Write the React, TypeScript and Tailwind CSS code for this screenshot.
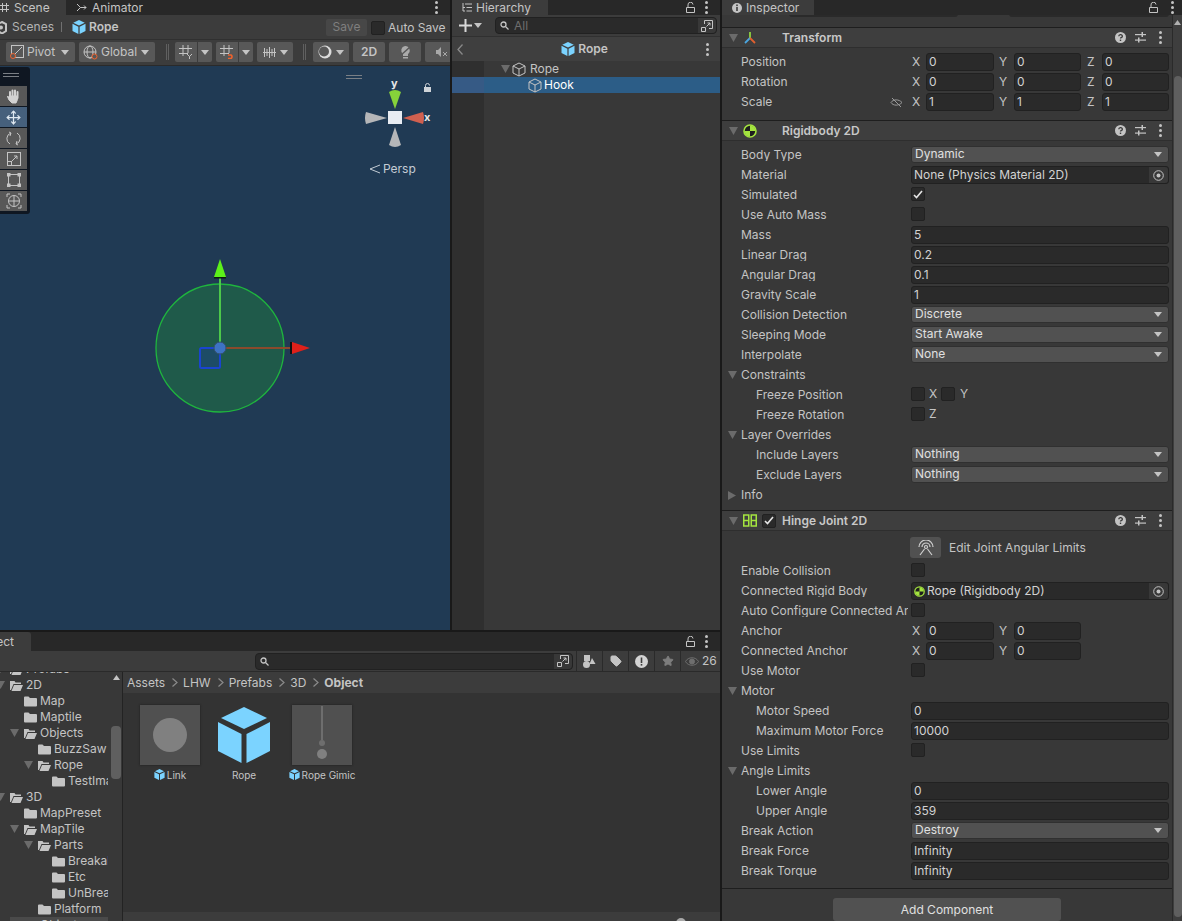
import React from 'react';
import { Move, Star, Tag } from 'lucide-react';

const Down = ({ className = '' }: { className?: string }) => (
  <svg width="9" height="8" viewBox="0 0 9 8" className={`shrink-0 ${className}`}><path d="M0 0h9L4.500 8z" fill="#6b6b6b" /></svg>
);
const Right = () => (
  <svg width="8" height="9" viewBox="0 0 8 9" className="shrink-0"><path d="M0 0v9l8-4.500z" fill="#6b6b6b" /></svg>
);
const Caret = ({ color = '#c4c4c4' }: { color?: string }) => (
  <svg width="8" height="5" viewBox="0 0 8 5" className="shrink-0"><path d="M0 0h8L4 5z" fill={color} /></svg>
);

const PrefabCube = ({ size = 14 }: { size?: number }) => (
  <svg width={size} height={size} viewBox="0 0 52 56" className="shrink-0">
    <path d="M26 0 49 11 26 22 3 11z" fill="#7bd3ff" />
    <path d="M0 15 23.500 27V56L0 44z" fill="#7bd3ff" />
    <path d="M52 15 28.500 27V56L52 44z" fill="#7bd3ff" />
  </svg>
);
const HollowCube = () => (
  <svg width="14" height="15" viewBox="0 0 14 15" fill="none" stroke="#c4c4c4" strokeWidth="1" className="shrink-0">
    <path d="M7 1 13 4v7l-6 3-6-3V4zM1 4l6 3 6-3M7 7v7" />
  </svg>
);
const Dots = () => (
  <svg width="3" height="13" viewBox="0 0 3 13" className="shrink-0" fill="#c4c4c4">
    <rect y="0" width="3" height="3" rx="1.500" /><rect y="5" width="3" height="3" rx="1.500" /><rect y="10" width="3" height="3" rx="1.500" />
  </svg>
);
const Lock = () => (
  <svg width="9" height="11" viewBox="0 0 9 11" fill="none" stroke="#c4c4c4" className="shrink-0">
    <path d="M.5 5.500h8v5h-8zM2 5.500V3a2.500 2.500 0 0 1 5-.5" />
  </svg>
);
const RbIcon = ({ size = 14 }: { size?: number }) => (
  <svg width={size} height={size} viewBox="0 0 14 14" className="shrink-0">
    <circle cx="7" cy="7" r="6" fill="#1e1e1e" stroke="#a4e43f" strokeWidth="1.600" />
    <path d="M7 7V1.500A5.500 5.500 0 0 1 12.500 7zM7 7v5.500A5.500 5.500 0 0 1 1.500 7z" fill="#a4e43f" />
  </svg>
);
const Help = () => (
  <svg width="11" height="11" viewBox="0 0 11 11" className="shrink-0">
    <circle cx="5.500" cy="5.500" r="5.500" fill="#c4c4c4" />
    <path d="M3.800 4.200a1.800 1.500 0 1 1 2.400 1.400c-.5.200-.7.500-.7 1" fill="none" stroke="#383838" strokeWidth="1.300" />
    <rect x="4.800" y="7.600" width="1.400" height="1.400" fill="#383838" />
  </svg>
);
const Sliders = () => (
  <svg width="11" height="11" viewBox="0 0 11 11" fill="#c4c4c4" className="shrink-0">
    <rect y="2" width="11" height="1.200" /><rect y="7.500" width="11" height="1.200" />
    <rect x="6.500" y="0" width="1.500" height="5" /><rect x="3" y="5.500" width="1.500" height="5" />
  </svg>
);
const Folder = ({ open }: { open?: boolean }) => (
  <svg width="13" height="11" viewBox="0 0 13 11" className="shrink-0">
    {open ? (
      <path d="M0 1h4.500l1 1.500H11v1.500H3.500L1 10H0zM4 5h9l-2.500 6H1.500z" fill="#c4c4c4" />
    ) : (
      <path d="M0 1.500A1 1 0 0 1 1 .5h3.500l1.500 1.500h6a1 1 0 0 1 1 1v6.500a1 1 0 0 1-1 1H1a1 1 0 0 1-1-1z" fill="#c4c4c4" />
    )}
  </svg>
);
const Search = () => (
  <svg width="9" height="9" viewBox="0 0 9 9" fill="none" stroke="#c4c4c4" strokeWidth="1.300" className="shrink-0">
    <circle cx="3.500" cy="3.500" r="2.500" /><path d="M5.500 5.500 8.500 8.500" />
  </svg>
);
const SearchWin = () => (
  <svg width="12" height="12" viewBox="0 0 12 12" fill="none" stroke="#c4c4c4" className="shrink-0">
    <path d="M3.500 4V.5h8v8H8M.500 7.500h4v4h-4zM5.500 6.500 9 3M6.500 3H9v2.500" />
  </svg>
);
const Target = () => (
  <svg width="11" height="11" viewBox="0 0 11 11" fill="none" className="shrink-0">
    <circle cx="5.500" cy="5.500" r="4.800" stroke="#c4c4c4" /><circle cx="5.500" cy="5.500" r="2" fill="#c4c4c4" />
  </svg>
);
const Check = () => (
  <svg width="10" height="9" viewBox="0 0 10 9" fill="none" stroke="#e6e6e6" strokeWidth="1.600"><path d="M1 5l2.500 2.500L9 1" /></svg>
);
const CheckBox = ({ on }: { on?: boolean }) => (
  <div className="w-[14px] h-[14px] rounded-[2px] bg-[#2a2a2a] border border-[#212121] flex items-center justify-center shrink-0">
    {on && <Check />}
  </div>
);
const Field = ({ v, w }: { v: string; w: string }) => (
  <div className={`h-[18px] ${w} rounded-[3px] bg-[#2a2a2a] border border-[#212121] pl-[2px] flex items-center text-[#d2d2d2]`}>{v}</div>
);

type Row =
  | { k: 'text' | 'select' | 'object'; label: string; v: string; sub?: boolean }
  | { k: 'check'; label: string; on?: boolean; sub?: boolean }
  | { k: 'fold'; label: string; closed?: boolean }
  | { k: 'vec'; label: string; v: string[]; link?: boolean }
  | { k: 'custom'; label: string; sub?: boolean; node: React.ReactNode };

const Label = ({ text, sub }: { text: string; sub?: boolean }) => (
  <div className={`w-[186px] mr-[3px] overflow-hidden whitespace-nowrap shrink-0 ${sub ? 'pl-[34px]' : 'pl-[19px]'}`}>{text}</div>
);

const InspectorRow = ({ r }: { r: Row }) => {
  if (r.k === 'fold') {
    return (
      <div className="h-5 flex items-center pl-[6px] gap-[4px]">
        <div className="w-[9px] flex">{r.closed ? <Right /> : <Down />}</div>
        <span>{r.label}</span>
      </div>
    );
  }
  return (
    <div className="h-5 flex items-center relative">
      <Label text={r.label} sub={'sub' in r ? r.sub : false} />
      {r.k === 'text' && <Field v={r.v} w="w-[258px]" />}
      {r.k === 'select' && (
        <div className="h-[17px] relative -top-[1px] w-[258px] rounded-[3px] bg-[#515151] border border-[#303030] pl-[3px] pr-[6px] flex items-center justify-between text-[#e0e0e0]">
          {r.v}<Caret />
        </div>
      )}
      {r.k === 'object' && (
        <div className="h-[18px] w-[258px] rounded-[3px] bg-[#2a2a2a] border border-[#212121] pl-[2px] flex items-center justify-between text-[#d2d2d2]">
          <span className="flex items-center gap-[2px]">{r.v.startsWith('Rope') && <RbIcon size={11} />}{r.v}</span>
          <span className="w-[19px] h-full bg-[#383838] rounded-r-[3px] flex items-center justify-center"><Target /></span>
        </div>
      )}
      {r.k === 'check' && <div className="relative -top-[1px]"><CheckBox on={r.on} /></div>}
      {r.k === 'custom' && r.node}
      {r.k === 'vec' && (
        <>
          {r.link && (
            <svg width="13" height="11" viewBox="0 0 13 11" fill="none" stroke="#9a9a9a" className="absolute left-[168px]">
              <path d="M1 5.500C3 2 9 2 12 5.500 9 9 3 9 1 5.500zM2 1l9 9" />
            </svg>
          )}
          <div className="w-[15px] pl-[1px]">X</div><Field v={r.v[0]} w="w-[68px]" />
          {r.v[1] !== undefined && <div className="w-5 pl-[5px]">Y</div>}
          {r.v[1] !== undefined && <Field v={r.v[1]} w="w-[67px]" />}
          {r.v[2] !== undefined && <div className="w-[21px] pl-[6px]">Z</div>}
          {r.v[2] !== undefined && <Field v={r.v[2]} w="w-[67px]" />}
        </>
      )}
    </div>
  );
};

const ComponentHeader = ({ icon, title, toggle }: { icon: React.ReactNode; title: string; toggle?: boolean }) => (
  <div className="h-[21px] flex items-center bg-[#3e3e3e] border-t border-[#1e1e1e] border-b-[#2e2e2e] border-b shrink-0">
    <div className="pl-[7px] w-[21px]"><Down /></div>
    <div className="w-[18px] flex justify-start">{icon}</div>
    {toggle ? (
      <><div className="ml-[1px] mr-[6px]"><CheckBox on /></div><span className="font-semibold text-[#c8c8c8]">{title}</span></>
    ) : (
      <span className="ml-[21px] font-semibold text-[#c8c8c8]">{title}</span>
    )}
    <div className="ml-auto flex items-center pr-[10px]"><Help /><div className="ml-[9px] mr-[13px]"><Sliders /></div><Dots /></div>
  </div>
);

const transformRows: Row[] = [
  { k: 'vec', label: 'Position', v: ['0', '0', '0'] },
  { k: 'vec', label: 'Rotation', v: ['0', '0', '0'] },
  { k: 'vec', label: 'Scale', v: ['1', '1', '1'], link: true },
];

const rigidRows: Row[] = [
  { k: 'select', label: 'Body Type', v: 'Dynamic' },
  { k: 'object', label: 'Material', v: 'None (Physics Material 2D)' },
  { k: 'check', label: 'Simulated', on: true },
  { k: 'check', label: 'Use Auto Mass' },
  { k: 'text', label: 'Mass', v: '5' },
  { k: 'text', label: 'Linear Drag', v: '0.2' },
  { k: 'text', label: 'Angular Drag', v: '0.1' },
  { k: 'text', label: 'Gravity Scale', v: '1' },
  { k: 'select', label: 'Collision Detection', v: 'Discrete' },
  { k: 'select', label: 'Sleeping Mode', v: 'Start Awake' },
  { k: 'select', label: 'Interpolate', v: 'None' },
  { k: 'fold', label: 'Constraints' },
  {
    k: 'custom', label: 'Freeze Position', sub: true,
    node: <div className="flex items-center relative -top-[1px]"><CheckBox /><span className="ml-[4px] w-[12px]">X</span><CheckBox /><span className="ml-[5px]">Y</span></div>,
  },
  { k: 'custom', label: 'Freeze Rotation', sub: true, node: <div className="flex items-center relative -top-[1px]"><CheckBox /><span className="ml-[4px]">Z</span></div> },
  { k: 'fold', label: 'Layer Overrides' },
  { k: 'select', label: 'Include Layers', v: 'Nothing', sub: true },
  { k: 'select', label: 'Exclude Layers', v: 'Nothing', sub: true },
  { k: 'fold', label: 'Info', closed: true },
];

const hingeRows: Row[] = [
  { k: 'check', label: 'Enable Collision' },
  { k: 'object', label: 'Connected Rigid Body', v: 'Rope (Rigidbody 2D)' },
  { k: 'check', label: 'Auto Configure Connected Anchor' },
  { k: 'vec', label: 'Anchor', v: ['0', '0'] },
  { k: 'vec', label: 'Connected Anchor', v: ['0', '0'] },
  { k: 'check', label: 'Use Motor' },
  { k: 'fold', label: 'Motor' },
  { k: 'text', label: 'Motor Speed', v: '0', sub: true },
  { k: 'text', label: 'Maximum Motor Force', v: '10000', sub: true },
  { k: 'check', label: 'Use Limits' },
  { k: 'fold', label: 'Angle Limits' },
  { k: 'text', label: 'Lower Angle', v: '0', sub: true },
  { k: 'text', label: 'Upper Angle', v: '359', sub: true },
  { k: 'select', label: 'Break Action', v: 'Destroy' },
  { k: 'text', label: 'Break Force', v: 'Infinity' },
  { k: 'text', label: 'Break Torque', v: 'Infinity' },
];

const Inspector = () => (
  <div className="w-[460px] h-full flex flex-col bg-[#383838] shrink-0 overflow-hidden">
    <div className="h-[15px] bg-[#282828] flex items-center shrink-0">
      <div className="w-[92px] h-full bg-[#3c3c3c] flex items-center pl-[10px] gap-[4px]">
        <svg width="10" height="10" viewBox="0 0 10 10"><circle cx="5" cy="5" r="5" fill="#c4c4c4" /><rect x="4.200" y="1.500" width="1.600" height="1.600" fill="#3c3c3c" /><rect x="4.200" y="4" width="1.600" height="4" fill="#3c3c3c" /></svg>
        <span>Inspector</span>
      </div>
      <div className="ml-auto flex items-center gap-[13px] pr-[8px]"><Lock /><Dots /></div>
    </div>
    <div className="flex-1 flex min-h-0">
      <div className="w-[450px] flex flex-col">
        <div className="h-[12px] flex items-start justify-end pr-[3px] overflow-hidden shrink-0">
          <div className="-mt-[5px] flex gap-[51px]">
            <div className="w-[169px] h-[7px] rounded-[3px] bg-[#2a2a2a]" />
            <div className="w-[160px] h-[7px] rounded-[3px] bg-[#2a2a2a]" />
          </div>
        </div>
        <ComponentHeader title="Transform" icon={
          <svg width="14" height="14" viewBox="0 0 14 14" fill="none" strokeWidth="1.800"><path d="M7 7V1" stroke="#8fd33f" /><path d="M7 7 2 12" stroke="#4ba6e0" /><path d="M7 7l5 5" stroke="#e0602f" /></svg>
        } />
        <div className="pt-[4px] pb-[8px]">{transformRows.map(r => <InspectorRow key={r.label} r={r} />)}</div>
        <ComponentHeader title="Rigidbody 2D" icon={<RbIcon />} />
        <div className="pt-[4px] pb-[5px]">{rigidRows.map(r => <InspectorRow key={r.label} r={r} />)}</div>
        <ComponentHeader title="Hinge Joint 2D" toggle icon={
          <svg width="14" height="13" viewBox="0 0 14 13" fill="none" stroke="#a4e43f" strokeWidth="1.500"><rect x=".75" y="1" width="5" height="11" /><rect x="8.250" y="1" width="5" height="11" /><path d="M.75 6.500h5M8.250 6.500h5" /></svg>
        } />
        <div className="h-[29px] flex items-center pl-[188px] pt-[4px] shrink-0">
          <div className="w-[31px] h-[21px] rounded-[3px] bg-[#515151] flex items-center justify-center">
            <svg width="18" height="16" viewBox="0 0 18 16" fill="none" stroke="#d0d0d0" strokeWidth="1.200"><path d="M2 7a7 7 0 0 1 14 0M5 7a4 4 0 0 1 8 0" /><circle cx="9" cy="7" r="1.500" /><path d="M7.500 9 3 15M10.500 9 15 15" /></svg>
          </div>
          <span className="ml-[8px]">Edit Joint Angular Limits</span>
        </div>
        <div className="pt-[1px]">{hingeRows.map(r => <InspectorRow key={r.label} r={r} />)}</div>
        <div className="mt-[7px] border-t border-[#1e1e1e] flex justify-center pt-[9px]">
          <div className="w-[228px] h-[23px] shrink-0 rounded-[3px] bg-[#515151] flex items-center justify-center text-[#e0e0e0]">Add Component</div>
        </div>
      </div>
      <div className="w-[10px] bg-[#3e3e3e] flex flex-col items-end border-l border-[#2a2a2a]">
        <svg width="7" height="5" viewBox="0 0 7 5" className="mt-[5px] mr-[1px]"><path d="M0 5h7L3.500 0z" fill="#b0b0b0" /></svg>
        <div className="w-[8px] flex-1 mt-[51px] mb-[4px] rounded-[4px] bg-[#5f5f5f]" />
      </div>
    </div>
  </div>
);

const ToolBtn = ({ w, children, className = '' }: { w: string; children: React.ReactNode; className?: string }) => (
  <div className={`h-5 ${w} rounded-[2px] bg-[#585858] flex items-center justify-center gap-[4px] shrink-0 ${className}`}>{children}</div>
);
const Sep = ({ className = '' }: { className?: string }) => (
  <div className={`w-[3px] h-[16px] border-x border-[#606060] shrink-0 ${className}`} />
);

const GridIcon = ({ accent }: { accent?: boolean }) => (
  <svg width="14" height="14" viewBox="0 0 14 14" fill="none" stroke="#c4c4c4" className="shrink-0">
    <path d="M4 0v11M9 0v8M0 3.500h13M0 8.500h9" />
    {accent ? <path d="M8 10h3a2 2 0 0 1 0 3.500H8" stroke="#f0622d" strokeWidth="1.600" /> : <path d="M8 9l2.500 2.500L13 9M10.500 11.500V14" />}
  </svg>
);

const PaletteBtn = ({ active, children }: { active?: boolean; children: React.ReactNode }) => (
  <div className={`h-[20px] flex items-center justify-center ${active ? 'bg-[#46607c]' : 'bg-[#585858]'}`}>{children}</div>
);

const SceneView = () => (
  <div className="w-[450px] h-full flex flex-col shrink-0">
    <div className="h-[15px] bg-[#282828] flex items-center shrink-0">
      <div className="w-[67px] h-full bg-[#3c3c3c] flex items-center gap-[5px] -ml-[1px] pl-[1px]">
        <svg width="9" height="9" viewBox="0 0 9 9" fill="none" stroke="#c4c4c4"><path d="M2.500 0v9M6.500 0v9M0 2.500h9M0 6.500h9" /></svg>
        <span>Scene</span>
      </div>
      <div className="flex items-center gap-[5px] ml-[11px]">
        <svg width="10" height="9" viewBox="0 0 10 9" fill="none" stroke="#c4c4c4"><path d="M0 1 3.500 4.500 0 8M3.500 4.500H9M7 2.500l2 2-2 2" /></svg>
        <span>Animator</span>
      </div>
      <div className="ml-auto pr-[12px]"><Dots /></div>
    </div>
    <div className="h-[25px] bg-[#3c3c3c] flex items-center shrink-0 border-b border-[#303030]">
      <svg width="9" height="13" viewBox="0 0 9 13" className="shrink-0 -ml-[2px]"><path d="M4 1 8 3v7l-4 2.500L0 10V3z" fill="none" stroke="#c4c4c4" strokeWidth="2" /><circle cx="3" cy="6.500" r="2" fill="#c4c4c4" /></svg>
      <span className="ml-[5px] text-[#b4b4b4]">Scenes</span>
      <div className="w-px h-[10px] bg-[#707070] ml-[7px]" />
      <div className="ml-[10px]"><PrefabCube /></div>
      <span className="ml-[3px] font-semibold">Rope</span>
      <div className="ml-auto w-[41px] h-[17px] rounded-[2px] bg-[#474747] flex items-center justify-center text-[#7f7f7f] mr-[4px]">Save</div>
      <div className="relative top-[1px]"><CheckBox /></div>
      <span className="ml-[3px] w-[62px] whitespace-nowrap relative top-[1px]">Auto Save</span>
    </div>
    <div className="h-[26px] bg-[#3c3c3c] flex items-center pl-[6px] pb-[1px] shrink-0 border-b border-[#2a2a2a] overflow-hidden">
      <ToolBtn w="w-[69px]" className="justify-start pl-[4px] !gap-[3px]">
        <svg width="14" height="14" viewBox="0 0 14 14" fill="none"><rect x="1.500" y=".5" width="12" height="12" stroke="#c4c4c4" /><path d="M4 10 12 2" stroke="#c4c4c4" /><circle cx="3" cy="11" r="2.500" stroke="#f0622d" fill="#585858" /></svg>
        <span>Pivot</span>
        <div className="ml-auto mr-[6px]"><Caret /></div>
      </ToolBtn>
      <ToolBtn w="w-[76px]" className="ml-[4px] justify-start pl-[4px] !gap-[3px]">
        <svg width="15" height="15" viewBox="0 0 15 15" fill="none" stroke="#c4c4c4"><circle cx="7" cy="7" r="6" /><ellipse cx="7" cy="7" rx="3" ry="6" /><path d="M1 7h12" /><circle cx="11.500" cy="11.500" r="2.500" stroke="#f0622d" fill="#585858" /></svg>
        <span>Global</span>
        <div className="ml-auto mr-[6px]"><Caret /></div>
      </ToolBtn>
      <Sep className="ml-[11px]" />
      <ToolBtn w="w-[22px]" className="ml-[6px] rounded-r-none"><GridIcon /></ToolBtn>
      <ToolBtn w="w-[14px]" className="ml-px rounded-l-none"><Caret /></ToolBtn>
      <ToolBtn w="w-[22px]" className="ml-[4px] rounded-r-none"><GridIcon accent /></ToolBtn>
      <ToolBtn w="w-[14px]" className="ml-px rounded-l-none"><Caret /></ToolBtn>
      <ToolBtn w="w-[36px]" className="ml-[4px]">
        <svg width="13" height="13" viewBox="0 0 13 13" fill="none" stroke="#c4c4c4"><path d="M0 6.500h13M1.500 2v9M4 3v7M6.500 1v11M9 3v7M11.500 2v9" /></svg>
        <Caret />
      </ToolBtn>
      <Sep className="ml-[10px]" />
      <ToolBtn w="w-[36px]" className="ml-[7px]">
        <svg width="14" height="14" viewBox="0 0 14 14"><circle cx="7" cy="7" r="6.500" fill="#dcdcdc" /><circle cx="6" cy="6.500" r="5" fill="#585858" /></svg>
        <Caret />
      </ToolBtn>
      <ToolBtn w="w-[32px]" className="ml-[4px] font-semibold">2D</ToolBtn>
      <ToolBtn w="w-[32px]" className="ml-[4px]">
        <svg width="12" height="14" viewBox="0 0 12 14"><path d="M6 1a4.500 4.500 0 0 1 3 8v2H4V9A4.500 4.500 0 0 1 6 1z" fill="#aaaaaa" /><rect x="4" y="12" width="5" height="1.500" fill="#aaaaaa" /><path d="M1 11 11 2" stroke="#585858" strokeWidth="1.500" /></svg>
      </ToolBtn>
      <ToolBtn w="w-[32px]" className="ml-[4px] justify-start pl-[11px]">
        <svg width="12" height="10" viewBox="0 0 12 10" fill="#a8a8a8"><path d="M0 3h2L5 0v10L2 7H0z" /><path d="M7 5l4 4M11 5 7 9" stroke="#a8a8a8" /></svg>
      </ToolBtn>
    </div>
    <div className="flex-1 bg-[#203a54] relative overflow-hidden">
      {/* tool palette overlay */}
      <div className="absolute left-0 top-[1px] w-[30px] h-[147px] bg-[#0f1722] rounded-r-[3px] flex flex-col pt-[6px]">
        <div className="h-[4px] w-4 ml-[3px] border-y border-[#7a7f85]" />
        <div className="mt-[9px] flex flex-col gap-[1px] w-[27px]">
          <PaletteBtn>
            <svg width="15" height="15" viewBox="0 0 15 15" fill="none" stroke="#d2d2d2" strokeLinecap="round">
              <path d="M4 3v6M6.500 1.500V7M9 1.500V7M11.500 3v6" strokeWidth="2" />
              <path d="M4 7h7.500v3.500L10 14H6L3 11 1.500 7.500" fill="#d2d2d2" strokeWidth="1" />
            </svg>
          </PaletteBtn>
          <PaletteBtn active><Move size={15} color="#dfe8f0" /></PaletteBtn>
          <PaletteBtn>
            <svg width="15" height="15" viewBox="0 0 15 15" fill="none" stroke="#c4c4c4"><path d="M4 13A6 6 0 0 1 5 2M11 2a6 6 0 0 1-1 11M5 2 3 1M5 2 4 5M10 13l2 1M10 13l1-3" /></svg>
          </PaletteBtn>
          <PaletteBtn>
            <svg width="14" height="14" viewBox="0 0 14 14" fill="none" stroke="#c4c4c4"><rect x=".5" y=".5" width="13" height="13" /><rect x=".5" y="9.500" width="4" height="4" /><path d="M5 9l5-5M7 4h3v3" /></svg>
          </PaletteBtn>
          <PaletteBtn>
            <svg width="14" height="14" viewBox="0 0 14 14" fill="none" stroke="#c4c4c4"><rect x="1.500" y="1.500" width="11" height="11" /><g fill="#c4c4c4"><rect x="0" y="0" width="3" height="3" /><rect x="11" y="0" width="3" height="3" /><rect x="0" y="11" width="3" height="3" /><rect x="11" y="11" width="3" height="3" /></g></svg>
          </PaletteBtn>
          <PaletteBtn>
            <svg width="16" height="16" viewBox="0 0 16 16" fill="none" stroke="#c4c4c4"><circle cx="8" cy="8" r="5.500" /><path d="M8 3v10M3 8h10" /><path d="M1 4V1h3M12 1h3v3M1 12v3h3M15 12v3h-3" /></svg>
          </PaletteBtn>
        </div>
      </div>
      {/* orientation gizmo overlay */}
      <div className="absolute left-[346px] top-[9px] w-[16px] h-[4px] border-y border-[#7a7f85]" />
      <svg width="80" height="80" viewBox="0 0 80 80" className="absolute left-[355px] top-[14px]">
        <path d="M34 12Q40 8 46 12L40 29z" fill="#86d23a" />
        <path d="M11 32Q9 38 11 44L32 38z" fill="#b5b6b8" />
        <path d="M68 32Q70 38 68 44L48 38z" fill="#d0604f" />
        <path d="M34 65Q40 69 46 65L40 47z" fill="#b5b6b8" />
        <rect x="33" y="31" width="14" height="13" fill="#e8ecf2" />
      </svg>
      <span className="absolute left-[391px] top-[12px] font-bold text-[#e6e6e6] leading-none text-[11px]">y</span>
      <span className="absolute left-[424px] top-[46px] font-bold text-[#e6e6e6] leading-none text-[11px]">x</span>
      <svg width="9" height="9" viewBox="0 0 9 9" className="absolute left-[423px] top-[17px]"><path d="M1 4h7v5H1z" fill="#cfd3d8" /><path d="M2.500 4V2.500a2 2 0 0 1 4 0" fill="none" stroke="#cfd3d8" /></svg>
      <div className="absolute left-[370px] top-[97px] flex items-center gap-[3px] text-[#c4ccd4]">
        <svg width="10" height="10" viewBox="0 0 10 10" fill="none" stroke="#c4ccd4"><path d="M10 1 0 5l10 4" /></svg>
        <span>Persp</span>
      </div>
      {/* move handle and collider drawing */}
      <svg width="180" height="160" viewBox="0 0 180 160" className="absolute left-[140px] top-[190px]">
        <circle cx="80" cy="92" r="64" fill="#1f5a4a" stroke="#1fb53e" strokeWidth="1.300" />
        <rect x="60" y="92" width="20" height="20" rx="1.500" fill="#1d4c66" stroke="#1a44d0" strokeWidth="2" />
        <path d="M80 92V21" stroke="#4cc84a" strokeWidth="2" />
        <path d="M80 92H150" stroke="#8a4a2c" strokeWidth="2" />
        <path d="M80 3 74 21H86z" fill="#5cf01a" />
        <rect x="74" y="21" width="12" height="1.500" fill="#0b1d10" />
        <circle cx="80" cy="92" r="6" fill="#3d73c4" stroke="#34506e" />
        <path d="M151 86V98" stroke="#111" strokeWidth="2" />
        <path d="M152 86 170 92 152 98z" fill="#e0201a" />
      </svg>
    </div>
  </div>
);

const Hierarchy = () => (
  <div className="flex-1 h-full flex flex-col min-w-0">
    <div className="h-[15px] bg-[#282828] flex items-center shrink-0">
      <div className="w-[96px] h-full bg-[#3c3c3c] flex items-center pl-[10px] gap-[4px]">
        <svg width="10" height="9" viewBox="0 0 10 9" stroke="#c4c4c4" className="shrink-0"><path d="M3 1h7M4.500 4.500H10M4.500 8H10M1 0v8M1 4.500h2M1 8h2" fill="none" /></svg>
        <span>Hierarchy</span>
      </div>
      <div className="ml-auto flex items-center gap-[10px] pr-[12px]"><Lock /><Dots /></div>
    </div>
    <div className="h-[21px] bg-[#3c3c3c] flex items-center pl-[7px] pr-[3px] shrink-0">
      <svg width="13" height="13" viewBox="0 0 13 13" fill="#d8d8d8"><rect y="5.500" width="13" height="2" /><rect x="5.500" width="2" height="13" /></svg>
      <div className="ml-[2px]"><Caret /></div>
      <div className="ml-[13px] flex-1 h-[17px] rounded-[4px] bg-[#2a2a2a] border border-[#212121] flex items-center pl-[4px] gap-[5px] text-[#6e6e6e]">
        <Search /><span>All</span>
        <div className="ml-auto w-[18px] h-full bg-[#383838] rounded-r-[4px] flex items-center justify-center"><SearchWin /></div>
      </div>
    </div>
    <div className="h-[25px] bg-[#3f3f3f] flex items-center relative shrink-0 border-t border-[#303030]">
      <svg width="6" height="11" viewBox="0 0 6 11" fill="none" stroke="#8a8a8a" strokeWidth="1.300" className="ml-[5px]"><path d="M5.500 .5 1 5.500l4.500 5" /></svg>
      <div className="flex-1 flex items-center justify-center gap-[3px] font-semibold"><PrefabCube /><span>Rope</span></div>
      <div className="pr-[11px]"><Dots /></div>
    </div>
    <div className="flex-1 bg-[#383838] flex flex-col min-h-0 relative">
      <div className="absolute left-0 top-0 bottom-0 w-[32px] bg-[#2f2f2f]" />
      <div className="h-4 flex items-center pl-[49px] gap-[2px] relative">
        <Down /><HollowCube /><span className="ml-[2px]">Rope</span>
      </div>
      <div className="h-4 flex items-center bg-[#2c5d87] text-white relative">
        <div className="w-[32px] h-full bg-[#365a85] shrink-0" />
        <div className="ml-[44px]"><HollowCube /></div>
        <span className="ml-[2px]">Hook</span>
      </div>
    </div>
  </div>
);

type TreeItem = { name: string; d: number; open?: boolean; sel?: boolean };
const tree: TreeItem[] = [
  { name: 'Prefabs', d: 0, open: true },
  { name: '2D', d: 0, open: true },
  { name: 'Map', d: 1 },
  { name: 'Maptile', d: 1 },
  { name: 'Objects', d: 1, open: true },
  { name: 'BuzzSaw', d: 2 },
  { name: 'Rope', d: 2, open: true },
  { name: 'TestImage', d: 3 },
  { name: '3D', d: 0, open: true },
  { name: 'MapPreset', d: 1 },
  { name: 'MapTile', d: 1, open: true },
  { name: 'Parts', d: 2, open: true },
  { name: 'Breakable', d: 3 },
  { name: 'Etc', d: 3 },
  { name: 'UnBreakable', d: 3 },
  { name: 'Platform', d: 2 },
  { name: 'Objects', d: 1, open: true, sel: true },
];

const Project = () => (
  <div className="h-full flex flex-col min-h-0">
    <div className="h-[19px] bg-[#282828] flex items-center shrink-0">
      <div className="w-[31px] h-full bg-[#3c3c3c] rounded-tr-[3px] flex items-center">
        <div className="w-[14px] overflow-hidden flex justify-end"><span>Project</span></div>
      </div>
      <div className="ml-auto flex items-center gap-[10px] pr-[12px]"><Lock /><Dots /></div>
    </div>
    <div className="h-[21px] bg-[#3c3c3c] flex items-center justify-end shrink-0 border-b border-[#2a2a2a]">
      <div className="w-[318px] h-[17px] rounded-[4px] bg-[#2a2a2a] border border-[#212121] flex items-center pl-[4px] justify-between mr-[3px]">
        <Search />
        <div className="w-[18px] h-full bg-[#383838] rounded-r-[4px] flex items-center justify-center"><SearchWin /></div>
      </div>
      <div className="flex h-full text-[#c4c4c4]">
        <div className="w-[26px] border-l border-[#2a2a2a] flex items-center justify-center">
          <svg width="13" height="13" viewBox="0 0 13 13" fill="#c4c4c4"><rect x="1" width="6" height="6" /><circle cx="3.500" cy="9.500" r="3.500" /><path d="M9 3l3.500 6h-6z" /></svg>
        </div>
        <div className="w-[26px] border-l border-[#2a2a2a] flex items-center justify-center"><Tag size={12} fill="#c4c4c4" color="#c4c4c4" /></div>
        <div className="w-[26px] border-l border-[#2a2a2a] flex items-center justify-center">
          <svg width="13" height="13" viewBox="0 0 13 13"><circle cx="6.500" cy="6.500" r="6.500" fill="#d4d4d4" /><rect x="5.700" y="2.500" width="1.600" height="5.500" fill="#3c3c3c" /><rect x="5.700" y="9" width="1.600" height="1.600" fill="#3c3c3c" /></svg>
        </div>
        <div className="w-[26px] border-l border-[#2a2a2a] flex items-center justify-center"><Star size={12} fill="#7d7d7d" color="#7d7d7d" /></div>
        <div className="w-[40px] border-l border-[#2a2a2a] flex items-center pl-[4px] gap-[3px]">
          <svg width="14" height="9" viewBox="0 0 14 9" fill="none" stroke="#6e6e6e"><path d="M.5 4.500C3-.5 11-.5 13.500 4.500 11 9.500 3 9.500.5 4.500z" /><circle cx="7" cy="4.500" r="2.500" fill="#6e6e6e" /></svg>
          <span>26</span>
        </div>
      </div>
    </div>
    <div className="flex-1 flex min-h-0">
      <div className="w-[108px] bg-[#383838] overflow-hidden shrink-0">
        <div className="-mt-[11px]">
          {tree.map((t, i) => (
            <div key={i} className={`h-4 flex items-center whitespace-nowrap ${t.sel ? 'bg-[#4a4a4a]' : ''}`} style={{ marginLeft: t.d * 14 - 4 }}>
              <div className="w-[14px] shrink-0 flex">{t.open && <Down />}</div>
              <Folder open={t.open} />
              <span className="ml-[3px]">{t.name}</span>
            </div>
          ))}
        </div>
      </div>
      <div className="w-[15px] bg-[#383838] flex flex-col items-center pl-[2px] border-r border-[#232323] shrink-0">
        <svg width="7" height="5" viewBox="0 0 7 5" className="mt-[3px]"><path d="M0 5h7L3.500 0z" fill="#c4c4c4" /></svg>
        <div className="w-[10px] h-[53px] mt-[46px] rounded-[4px] bg-[#5f5f5f]" />
      </div>
      <div className="flex-1 flex flex-col min-w-0 bg-[#333333]">
        <div className="h-[21px] bg-[#3c3c3c] flex items-center pl-[4px] shrink-0">
          {['Assets', 'LHW', 'Prefabs', '3D'].map(c => (
            <React.Fragment key={c}>
              <span className="mr-[7px]">{c}</span>
              <svg width="6" height="9" viewBox="0 0 6 9" fill="none" stroke="#8a8a8a" strokeWidth="1.200" className="mr-[5px]"><path d="m.5.5 4.500 4-4.500 4" /></svg>
            </React.Fragment>
          ))}
          <span className="font-bold">Object</span>
        </div>
        <div className="flex-1 flex pt-[12px] pl-[17px] text-[10px]">
          <div className="w-[60px] flex flex-col items-center">
            <div className="w-[60px] h-[60px] bg-[#505050] shadow-[0_0_2px_#1c1c1c] flex items-center justify-center">
              <div className="w-[34px] h-[34px] rounded-full bg-[#808080]" />
            </div>
            <div className="mt-[4px] flex items-center gap-[2px] justify-center whitespace-nowrap"><PrefabCube size={11} /><span>Link</span></div>
          </div>
          <div className="w-[60px] ml-[14px] flex flex-col items-center">
            <div className="h-[60px] flex items-center"><PrefabCube size={56} /></div>
            <div className="mt-[5px] whitespace-nowrap">Rope</div>
          </div>
          <div className="w-[60px] ml-[18px] flex flex-col items-center">
            <div className="w-[60px] h-[60px] bg-[#505050] shadow-[0_0_2px_#1c1c1c] flex flex-col items-center pt-[1px]">
              <div className="w-[2px] h-[34px] bg-[#6e6e6e]" />
              <div className="w-[6px] h-[6px] rounded-full bg-[#6e6e6e]" />
              <div className="w-[10px] h-[10px] rounded-full bg-[#808080] mt-[3px]" />
            </div>
            <div className="mt-[4px] flex items-center gap-[2px] justify-center whitespace-nowrap"><PrefabCube size={11} /><span>Rope Gimic</span></div>
          </div>
        </div>
        <div className="h-[9px] bg-[#3c3c3c] relative shrink-0 overflow-hidden">
          <div className="absolute left-[553px] top-[6px] w-[10px] h-[10px] rounded-full bg-[#a8a8a8]" />
        </div>
      </div>
    </div>
  </div>
);

export default function App() {
  return (
    <div className="w-[1182px] h-[921px] overflow-hidden flex bg-[#191919] text-[12px] leading-none text-[#c4c4c4] [font-family:Inter,sans-serif]">
      <div className="w-[720px] h-full flex flex-col shrink-0">
        <div className="h-[630px] flex gap-[2px] shrink-0">
          <SceneView />
          <Hierarchy />
        </div>
        <div className="flex-1 mt-[2px] min-h-0"><Project /></div>
      </div>
      <div className="w-[2px] shrink-0" />
      <Inspector />
    </div>
  );
}
